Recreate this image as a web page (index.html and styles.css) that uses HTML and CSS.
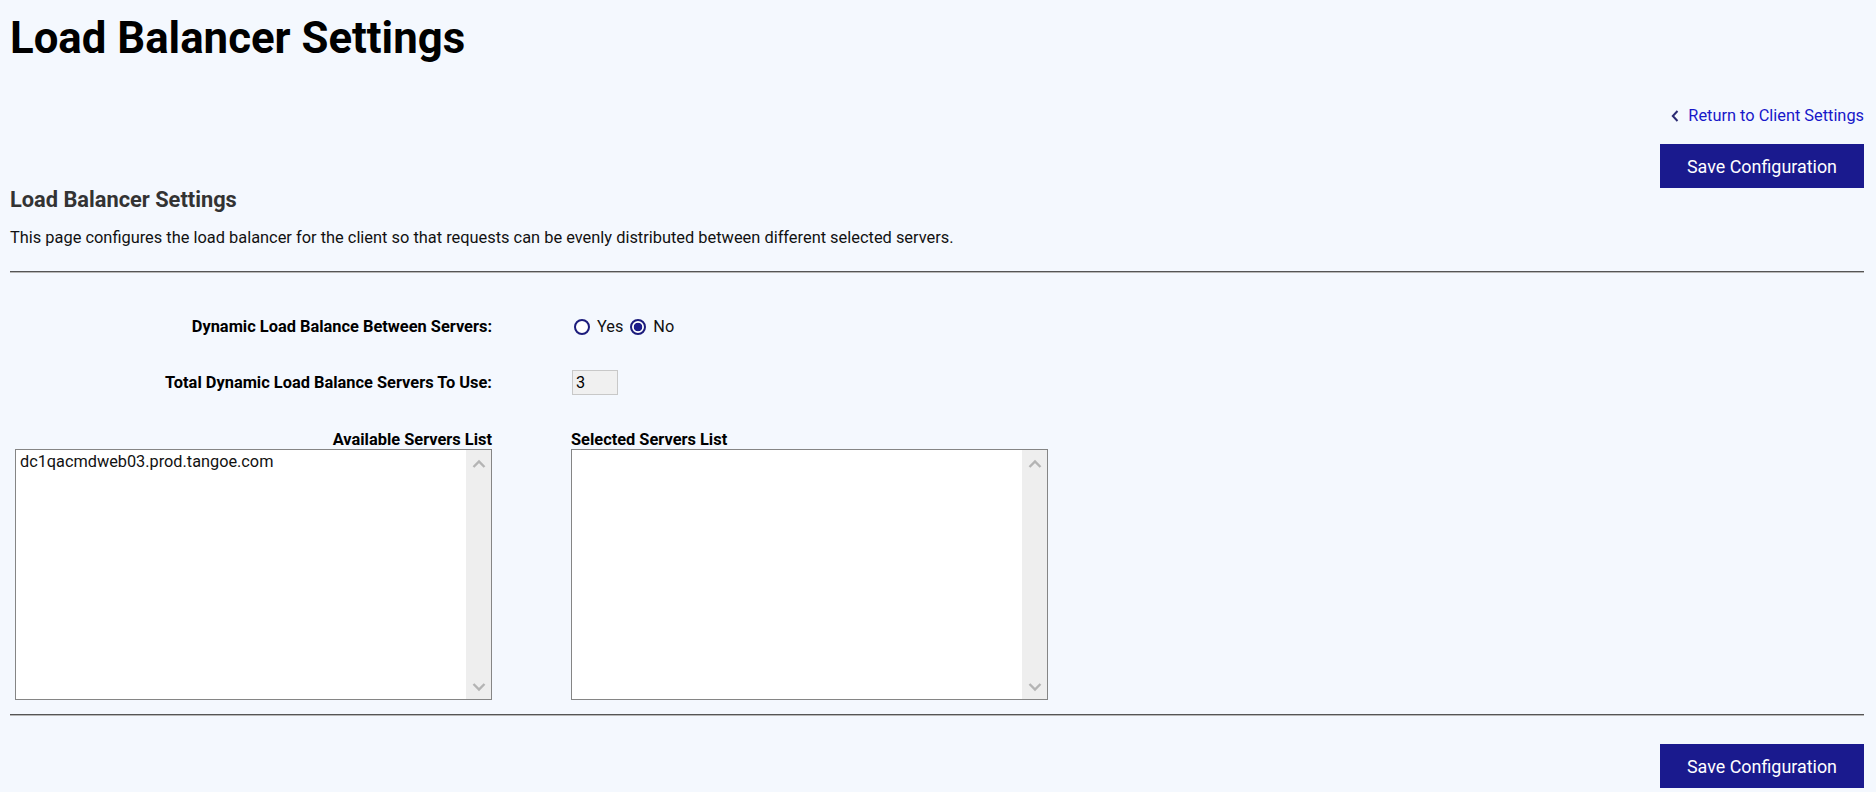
FILE: index.html
```html
<!DOCTYPE html>
<html lang="en">
<head>
<meta charset="utf-8">
<title>Load Balancer Settings</title>
<link rel="stylesheet" href="styles.css">
</head>
<body>
<div class="page">
  <h1 class="page-title">Load Balancer Settings</h1>

  <div class="link-row">
    <a class="back-link" href="#">
      <svg class="chev" width="8" height="12" viewBox="0 0 8 12" aria-hidden="true"><path d="M6.5 1 L1.8 6 L6.5 11" fill="none" stroke="#2a2a72" stroke-width="2"/></svg>
      <span>Return to Client Settings</span>
    </a>
  </div>

  <div class="button-row top">
    <button class="btn-primary" type="button">Save Configuration</button>
  </div>

  <h2 class="section-title">Load Balancer Settings</h2>
  <p class="description">This page configures the load balancer for the client so that requests can be evenly distributed between different selected servers.</p>

  <hr class="divider">

  <div class="form">
    <div class="form-row row-1">
      <div class="label">Dynamic Load Balance Between Servers:</div>
      <div class="field radios">
        <label class="radio"><input type="radio" name="dyn" value="yes"><span>Yes</span></label>
        <label class="radio"><input type="radio" name="dyn" value="no" checked><span>No</span></label>
      </div>
    </div>

    <div class="form-row row-2">
      <div class="label">Total Dynamic Load Balance Servers To Use:</div>
      <div class="field"><input class="num-input" type="text" value="3" readonly></div>
    </div>

    <div class="form-row row-3">
      <div class="list-col left">
        <div class="list-title">Available Servers List</div>
        <div class="listbox">
          <div class="list-items">
            <div class="list-item">dc1qacmdweb03.prod.tangoe.com</div>
          </div>
          <div class="scroll-gutter">
            <svg class="arrow" width="14" height="10" viewBox="0 0 14 10" aria-hidden="true"><path d="M1.5 8 L7 2.5 L12.5 8" fill="none" stroke="#b4b4b4" stroke-width="2.4"/></svg>
            <svg class="arrow" width="14" height="10" viewBox="0 0 14 10" aria-hidden="true"><path d="M1.5 2 L7 7.5 L12.5 2" fill="none" stroke="#b4b4b4" stroke-width="2.4"/></svg>
          </div>
        </div>
      </div>
      <div class="list-col right">
        <div class="list-title">Selected Servers List</div>
        <div class="listbox">
          <div class="list-items"></div>
          <div class="scroll-gutter">
            <svg class="arrow" width="14" height="10" viewBox="0 0 14 10" aria-hidden="true"><path d="M1.5 8 L7 2.5 L12.5 8" fill="none" stroke="#b4b4b4" stroke-width="2.4"/></svg>
            <svg class="arrow" width="14" height="10" viewBox="0 0 14 10" aria-hidden="true"><path d="M1.5 2 L7 7.5 L12.5 2" fill="none" stroke="#b4b4b4" stroke-width="2.4"/></svg>
          </div>
        </div>
      </div>
    </div>
  </div>

  <hr class="divider bottom">

  <div class="button-row bottom">
    <button class="btn-primary" type="button">Save Configuration</button>
  </div>
</div>
</body>
</html>
```

FILE: styles.css
```css
* { box-sizing: border-box; }

html, body {
  margin: 0;
  padding: 0;
  background: #f4f8fe;
}

body {
  font-family: Roboto, "Liberation Sans", Arial, sans-serif;
  color: #111;
  overflow: hidden;
}

.page {
  margin: 0 12px 0 10px;
}

.page-title {
  margin: 12px 0 0;
  font-size: 43.75px;
  line-height: 52px;
  font-weight: 700;
  color: #000;
}

.link-row {
  margin-top: 42px;
  display: flex;
  justify-content: flex-end;
  line-height: 20px;
}

.back-link {
  display: flex;
  align-items: center;
  gap: 9px;
  color: #1717c9;
  text-decoration: none;
  font-size: 16.35px;
}

.chev { display: block; }

.button-row {
  display: flex;
  justify-content: flex-end;
}

.button-row.top { margin-top: 18px; }
.button-row.bottom { margin-top: 28px; }

.btn-primary {
  width: 204px;
  height: 44px;
  border: 0;
  border-radius: 0;
  background: #1a1a8e;
  color: #fff;
  font-family: Roboto, "Liberation Sans", Arial, sans-serif;
  font-size: 17.9px;
  padding: 0;
  cursor: pointer;
}

.section-title {
  margin: 0;
  font-size: 21.8px;
  line-height: 24px;
  font-weight: 700;
  color: #333;
}

.description {
  margin: 16px 0 0;
  font-size: 16.4px;
  line-height: 20px;
  color: #111;
}

.divider {
  margin: 23px 0 0;
  height: 0;
  border: 0;
  border-top: 1px solid #555;
  border-bottom: 1px solid #b8b8b8;
}

.divider.bottom { margin-top: 14px; }

.form {
  margin-left: 5px;
}

.form-row {
  display: grid;
  grid-template-columns: 477px 477px;
  column-gap: 79px;
  align-items: center;
}

.row-1 { margin-top: 44px; min-height: 20px; }
.row-2 { margin-top: 33px; }
.row-3 { margin-top: 35px; align-items: start; }

.label {
  text-align: right;
  font-size: 16.4px;
  line-height: 20px;
  font-weight: 700;
  color: #000;
}

.radios {
  display: flex;
  align-items: center;
  gap: 7px;
  font-size: 16.3px;
  line-height: 20px;
}

.radio {
  display: flex;
  align-items: center;
  gap: 7px;
}

.radio input {
  appearance: none;
  -webkit-appearance: none;
  margin: 0;
  width: 16px;
  height: 16px;
  border: 2px solid #1c1c7c;
  border-radius: 50%;
  background: #fff;
}

.radio:first-child input { margin-left: 3px; }

.radio input:checked {
  background: radial-gradient(circle, #1c1c8a 0 4px, #fff 4.6px);
}

.num-input {
  display: block;
  width: 46px;
  height: 25px;
  margin: 0 0 0 1px;
  padding: 0 3px;
  border: 1px solid #c8c8c8;
  background: #f0f0f0;
  font-family: Roboto, "Liberation Sans", Arial, sans-serif;
  font-size: 16.3px;
  color: #000;
}

.list-col.left .list-title { text-align: right; }

.list-title {
  font-size: 16.4px;
  line-height: 19px;
  font-weight: 700;
  color: #000;
}

.listbox {
  display: flex;
  height: 251px;
  border: 1px solid #858585;
  background: #fff;
}

.list-items {
  flex: 1;
  padding: 2px 4px;
}

.list-item {
  font-size: 16.3px;
  line-height: 20px;
  color: #111;
}

.scroll-gutter {
  width: 25px;
  background: #eeeeee;
  display: flex;
  flex-direction: column;
  justify-content: space-between;
  align-items: center;
  padding: 9px 0 7px;
}

.arrow { display: block; }
```
